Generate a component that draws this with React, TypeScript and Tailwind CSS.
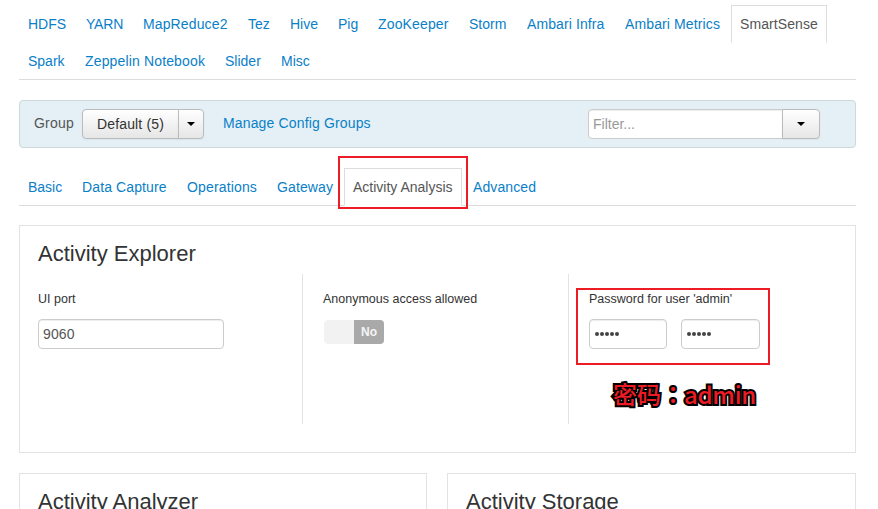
import { ReactNode } from "react";

type Tab = { name: string; size: string };

const services: Tab[] = [
  { name: "HDFS", size: "w-[38px]" },
  { name: "YARN", size: "w-[37px] tracking-[-0.2px]" },
  { name: "MapReduce2", size: "w-[85px] tracking-[0.13px]" },
  { name: "Tez", size: "w-[22px]" },
  { name: "Hive", size: "w-7" },
  { name: "Pig", size: "w-5" },
  { name: "ZooKeeper", size: "w-[71px] tracking-[0.15px]" },
  { name: "Storm", size: "w-[38px]" },
  { name: "Ambari Infra", size: "w-[78px] tracking-[0.1px]" },
  { name: "Ambari Metrics", size: "w-[95px] tracking-[0.12px]" },
  { name: "SmartSense", size: "w-[78px] tracking-[0.08px]" },
  { name: "Spark", size: "w-[37px]" },
  { name: "Zeppelin Notebook", size: "w-[120px] tracking-[0.15px]" },
  { name: "Slider", size: "w-9" },
  { name: "Misc", size: "w-[30px]" },
];

const sections: Tab[] = [
  { name: "Basic", size: "w-[34px]" },
  { name: "Data Capture", size: "w-[85px] tracking-[0.12px]" },
  { name: "Operations", size: "w-[70px] tracking-[0.15px]" },
  { name: "Gateway", size: "w-14 tracking-[0.12px]" },
  { name: "Activity Analysis", size: "w-[100px]" },
  { name: "Advanced", size: "w-[63px] tracking-[0.1px]" },
];

function Tabs({ items, active, marked }: { items: Tab[]; active: string; marked?: boolean }) {
  return (
    <ul className="flex flex-wrap border-b border-[#ddd]">
      {items.map(({ name, size }) => (
        <li
          key={name}
          className={
            name === active
              ? "relative -mb-px mr-0.5 h-[38px] border border-b-white border-[#ddd] bg-white px-2 pt-2 text-[#555]"
              : "mr-0.5 h-[37px] border border-b-0 border-transparent px-2 pt-2 text-[#0a80c8]"
          }
        >
          <span className={`block whitespace-nowrap ${size}`}>{name}</span>
          {marked && name === active && (
            <span className="absolute -top-[13px] -left-[7px] h-[53px] w-[130px] border-2 border-[#ed1c24]" />
          )}
        </li>
      ))}
    </ul>
  );
}

function Caret() {
  return <span className="border-x-4 border-t-4 border-x-transparent border-t-black" />;
}

function Panel({ title, className, children }: { title: string; className: string; children?: ReactNode }) {
  return (
    <section className={`border border-[#e3e3e3] bg-white px-[18px] pt-[13px] ${className}`}>
      <h2 className="text-[22px] leading-[30px] text-[#333]">{title}</h2>
      {children}
    </section>
  );
}

const label = "text-[12.5px] leading-5 text-[#333]";
const field = "flex h-[30px] items-center rounded border border-[#ccc] bg-white text-[#555] shadow-[inset_0_1px_1px_rgba(0,0,0,0.075)]";
const button = "flex items-center justify-center border border-[#bbb] bg-linear-to-b from-white to-[#e6e6e6] shadow-[0_1px_2px_rgba(0,0,0,0.05)]";

export default function App() {
  return (
    <div className="h-[509px] w-[878px] overflow-hidden bg-white pt-[5px] pr-[22px] pl-[19px] font-['Liberation_Sans',Arial,sans-serif] text-[14px] leading-5">
      <Tabs items={services} active="SmartSense" />

      <div className="mt-5 flex h-12 items-center rounded border border-[#ccd8dc] bg-[#e4f0f5] pr-[35px] pl-[14px]">
        <span className="w-12 pb-0.5 tracking-[0.2px] text-[#555]">Group</span>
        <div className="flex h-[30px] text-[#333]">
          <span className={`${button} w-[97px] rounded-l tracking-[0.15px]`}>Default (5)</span>
          <span className={`${button} -ml-px w-[26px] rounded-r`}>
            <Caret />
          </span>
        </div>
        <span className="ml-[19px] pb-0.5 tracking-[0.15px] text-[#0a80c8]">Manage Config Groups</span>
        <div className="ml-auto flex">
          <span className="flex h-[30px] w-[195px] items-center rounded-l border border-[#ccc] bg-white px-1 text-[#999] shadow-[inset_0_1px_1px_rgba(0,0,0,0.075)]">
            Filter...
          </span>
          <span className={`${button} -ml-px h-[30px] w-[38px] rounded-r`}>
            <Caret />
          </span>
        </div>
      </div>

      <div className="mt-5">
        <Tabs items={sections} active="Activity Analysis" marked />
      </div>

      <Panel title="Activity Explorer" className="mt-[19px] h-[228px]">
        <div className="mt-[5px] flex h-[150px]">
          <div className="w-[265px] border-r border-[#e3e3e3] pt-[15px]">
            <div className={label}>UI port</div>
            <div className={`${field} mt-[10px] w-[186px] px-1 tracking-[0.1px]`}>9060</div>
          </div>
          <div className="w-[266px] border-r border-[#e3e3e3] pt-[15px] pl-5">
            <div className={label}>Anonymous access allowed</div>
            <div className="mt-[11px] ml-px flex h-6 w-[60px] overflow-hidden rounded bg-[#f2f2f2]">
              <span className="ml-auto w-[30px] bg-[#a9a9a9] text-center text-[12px] leading-6 font-bold text-[#f5f5f5]">
                No
              </span>
            </div>
          </div>
          <div className="relative pt-[15px] pl-5">
            <div className={label}>Password for user 'admin'</div>
            <div className="mt-[10px] flex gap-[14px]">
              {["w-[78px]", "w-[79px]"].map((width) => (
                <div key={width} className={`${field} ${width} gap-px pl-[5px]`}>
                  {[0, 1, 2, 3, 4].map((dot) => (
                    <i key={dot} className="h-1 w-1 rounded-full bg-[#444]" />
                  ))}
                </div>
              ))}
            </div>
            <span className="absolute top-[14px] left-[7px] h-[77px] w-[194px] border-2 border-[#ed1c24]" />
            <span className="absolute top-[102px] left-11 font-['Noto_Sans_CJK_SC',sans-serif] text-[24px] leading-9 font-medium whitespace-nowrap text-[#ed1c24] [-webkit-text-stroke:4px_black] [paint-order:stroke_fill]">
              密码<span className="font-['Noto_Sans_CJK_TC',sans-serif]" lang="zh-TW">：</span>
              <span className="-ml-px tracking-[-0.3px]">admin</span>
            </span>
          </div>
        </div>
      </Panel>

      <div className="mt-5 flex gap-5">
        <Panel title="Activity Analyzer" className="h-60 w-[408px]" />
        <Panel title="Activity Storage" className="h-60 w-[409px]" />
      </div>
    </div>
  );
}
